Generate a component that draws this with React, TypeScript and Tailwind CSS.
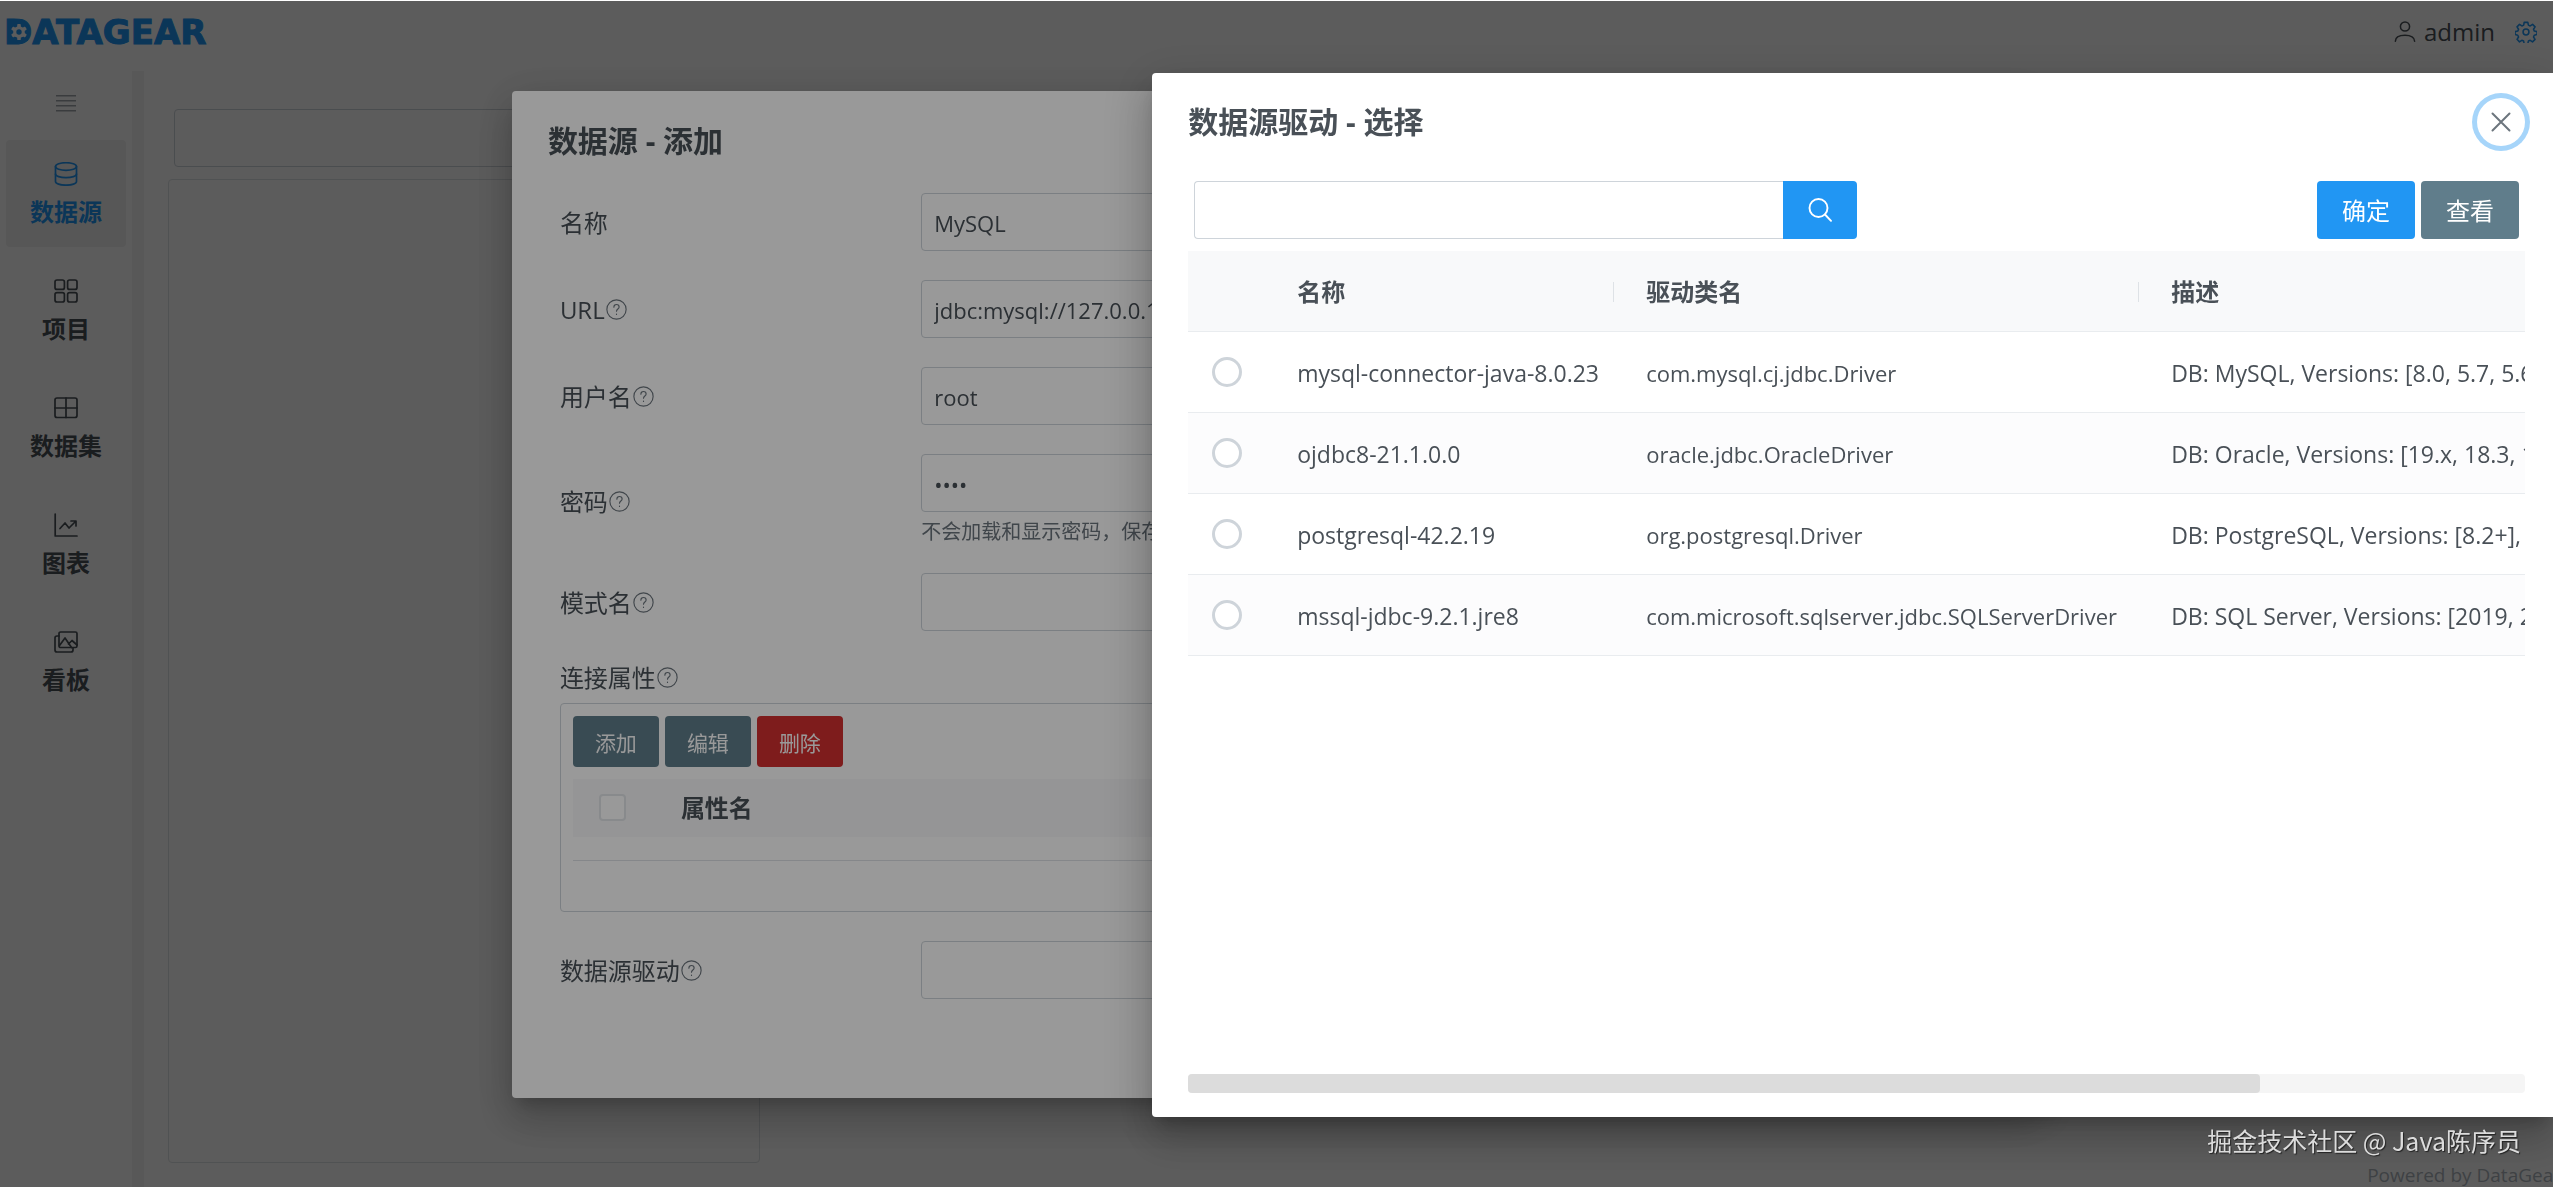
import { ReactNode } from "react";
import clsx from "clsx";

const DRIVERS = [
  {
    name: "mysql-connector-java-8.0.23",
    className: "com.mysql.cj.jdbc.Driver",
    desc: "DB: MySQL, Versions: [8.0, 5.7, 5.6, 5.5]",
  },
  {
    name: "ojdbc8-21.1.0.0",
    className: "oracle.jdbc.OracleDriver",
    desc: "DB: Oracle, Versions: [19.x, 18.3, 12.2]",
  },
  {
    name: "postgresql-42.2.19",
    className: "org.postgresql.Driver",
    desc: "DB: PostgreSQL, Versions: [8.2+], JRE: [8+]",
  },
  {
    name: "mssql-jdbc-9.2.1.jre8",
    className: "com.microsoft.sqlserver.jdbc.SQLServerDriver",
    desc: "DB: SQL Server, Versions: [2019, 2017, 2016]",
  },
];

const DIALOG_SHADOW =
  "shadow-[0_11px_15px_-7px_rgba(0,0,0,0.2),0_24px_38px_3px_rgba(0,0,0,0.14),0_9px_46px_8px_rgba(0,0,0,0.12)]";

function Icon({ children, className = "size-6" }: { children: ReactNode; className?: string }) {
  return (
    <svg
      viewBox="0 0 24 24"
      fill="none"
      stroke="currentColor"
      strokeWidth="1.7"
      strokeLinecap="round"
      strokeLinejoin="round"
      aria-hidden="true"
      className={clsx("shrink-0", className)}
    >
      {children}
    </svg>
  );
}

const NAV = [
  {
    label: "数据源",
    active: true,
    icon: (
      <>
        <ellipse cx="12" cy="4.5" rx="10.5" ry="3.8" />
        <path d="M1.5 4.5v15c0 2.1 4.7 3.7 10.5 3.7s10.5-1.6 10.5-3.7v-15" />
        <path d="M1.5 12c0 2.1 4.7 3.7 10.5 3.7s10.5-1.6 10.5-3.7" />
      </>
    ),
  },
  {
    label: "项目",
    icon: (
      <>
        <rect x="1" y="1" width="9.4" height="9.4" rx="2" />
        <rect x="13.6" y="1" width="9.4" height="9.4" rx="2" />
        <rect x="1" y="13.6" width="9.4" height="9.4" rx="2" />
        <rect x="13.6" y="13.6" width="9.4" height="9.4" rx="2" />
      </>
    ),
  },
  {
    label: "数据集",
    icon: (
      <>
        <rect x="1" y="2" width="22" height="19.5" rx="2" />
        <path d="M12 2v19.5M1 12h22" />
      </>
    ),
  },
  {
    label: "图表",
    icon: (
      <>
        <path d="M1.2 1v22H23" />
        <path d="M6 15.5l5-5.5 4 5 6.5-6.5M17 8h5v5" />
      </>
    ),
  },
  {
    label: "看板",
    icon: (
      <>
        <rect x="5" y="2" width="18" height="15.5" rx="1.6" />
        <path d="M5 6H3c-1.2 0-2 .8-2 2v12c0 1.2.8 2 2 2h14c1.2 0 2-.8 2-2v-2" />
        <path d="M5.5 15.5L11 8l6.5 9.5M14.5 14l3.5-3.5 5 4.5" />
      </>
    ),
  },
];

function Logo() {
  return (
    <a
      href="#home"
      aria-label="DATAGEAR"
      className="relative ml-1 font-['DejaVu_Sans',sans-serif] text-[34px] leading-none font-bold text-[#2196f3] [-webkit-text-stroke:1px_#2196f3]"
    >
      DATAGEAR
      <svg viewBox="0 0 20 20" aria-hidden="true" className="absolute top-2 left-1.5 size-[18px]">
        <rect width="20" height="20" fill="#2196f3" />
        <g fill="#fff">
          <circle cx="10" cy="10" r="6.5" />
          <rect x="8" y="1" width="4" height="18" rx="1" />
          <rect x="8" y="1" width="4" height="18" rx="1" transform="rotate(60 10 10)" />
          <rect x="8" y="1" width="4" height="18" rx="1" transform="rotate(120 10 10)" />
        </g>
        <circle cx="10" cy="10" r="3" fill="#2196f3" />
      </svg>
    </a>
  );
}

function Help() {
  return (
    <Icon className="ml-px size-[21px] text-[#6c757d]">
      <circle cx="12" cy="12" r="11" strokeWidth="1.3" />
      <path d="M9 9.3c0-1.8 1.3-3 3-3s3 1.2 3 2.9c0 2.3-3 2.3-3 4.8M12 17.2v.5" strokeWidth="1.3" />
    </Icon>
  );
}

function Field({
  id,
  label,
  help = true,
  hint,
  type = "text",
  value = "",
}: {
  id: string;
  label: string;
  help?: boolean;
  hint?: string;
  type?: string;
  value?: string;
}) {
  return (
    <div className="flex items-center">
      <label htmlFor={id} className="flex w-1/4 items-center pt-0.5">
        {label}
        {help && <Help />}
      </label>
      <div className="flex-1">
        <input
          id={id}
          type={type}
          defaultValue={value}
          className="block h-[58px] w-full rounded border border-[#ced4da] bg-white px-3 pt-0.5 text-[22px]"
        />
        {hint && <p className="pt-1 text-xl leading-8 text-[#6c757d]">{hint}</p>}
      </div>
    </div>
  );
}

function SmallButton({ children, danger }: { children: ReactNode; danger?: boolean }) {
  return (
    <button
      type="button"
      className={clsx(
        "h-[51px] w-[86px] rounded pt-1 text-[21px] text-white",
        danger ? "bg-[#d32f2f]" : "bg-[#607d8b]"
      )}
    >
      {children}
    </button>
  );
}

function MainPage() {
  return (
    <div className="flex h-screen flex-col bg-white">
      <header className="flex h-[71px] shrink-0 items-center justify-between pr-4 pb-2">
        <Logo />
        <div className="flex items-center">
          <button type="button" className="flex items-center gap-2">
            <Icon className="size-[22px]">
              <circle cx="12" cy="6" r="5" />
              <path d="M1.5 22c0-4 4-6.5 10.5-6.5s10.5 2.5 10.5 6.5" />
            </Icon>
            <span>admin</span>
          </button>
          <button type="button" aria-label="设置" className="ml-5 text-[#2196f3]">
            <Icon className="size-[22px]">
              <circle cx="12" cy="12" r="3.2" />
              <path d="M10 1.5h4l.6 3 2 .9 2.6-1.7 2.7 2.7-1.7 2.6.9 2 2.9.6v3.2l-3 .7-.8 2 1.7 2.5-2.8 2.8-2.5-1.7-2 .8-.6 2.9h-4l-.6-2.9-2-.8-2.5 1.7-2.7-2.8 1.7-2.5-.9-2-2.9-.7v-3.200l2.9-.6.9-2-1.7-2.6 2.7-2.7 2.6 1.700 2-.9z" />
            </Icon>
          </button>
        </div>
      </header>

      <div className="flex min-h-0 flex-1">
        <nav className="flex w-[132px] shrink-0 flex-col items-center">
          <button type="button" aria-label="折叠菜单" className="mt-6 mb-7 text-[#a0a6ac]">
            <svg viewBox="0 0 20 17" fill="currentColor" aria-hidden="true" className="h-[17px] w-5">
              <path d="M0 0h20v1.5H0zM0 5h20v1.5H0zM0 10h20v1.5H0zM0 15h20v1.5H0z" />
            </svg>
          </button>
          {NAV.map((item) => (
            <a
              key={item.label}
              href="#nav"
              className={clsx(
                "mb-2.5 flex h-[107px] w-[120px] flex-col items-center justify-center gap-2 rounded pt-1 font-bold",
                item.active && "bg-[#f1f1f1] text-[#2196f3]"
              )}
            >
              <Icon>{item.icon}</Icon>
              <span className="leading-9">{item.label}</span>
            </a>
          ))}
        </nav>
        <div className="w-3 shrink-0 bg-[#f4f4f4]" />

        <main className="flex min-w-0 flex-1 flex-col pt-[38px]">
          <section className="flex min-h-0 w-[616px] flex-1 flex-col gap-3 pl-6">
            <input
              type="text"
              aria-label="搜索"
              className="ml-1.5 h-[58px] rounded border border-[#ced4da] px-3"
            />
            <div className="flex-1 rounded border border-[#dee2e6]" />
          </section>
          <footer className="-mr-2 h-6 text-right text-[19px] leading-6 text-[#adb5bd]">
            Powered by DataGear
          </footer>
        </main>
      </div>
    </div>
  );
}

function SourceDialog() {
  return (
    <div className="fixed inset-0 top-px flex items-center justify-center bg-black/40">
      <div
        role="dialog"
        aria-label="数据源 - 添加"
        className={clsx("w-[59.9%] rounded bg-white px-9 pt-7 pb-[99px]", DIALOG_SHADOW)}
      >
        <h2 className="text-3xl leading-[44px] font-bold">数据源 - 添加</h2>

        <form className="mt-[30px] flex flex-col gap-[29px] pl-3">
          <Field id="name" label="名称" help={false} value="MySQL" />
          <Field id="url" label="URL" value="jdbc:mysql://127.0.0.1:3306/datagear" />
          <Field id="user" label="用户名" value="root" />
          <div className="-mb-1">
            <Field
              id="password"
              label="密码"
              type="password"
              value="root"
              hint="不会加载和显示密码，保存时密码为空表示不修改"
            />
          </div>
          <Field id="schema" label="模式名" />

          <div>
            <div className="flex items-center pb-2 leading-[35px]">
              连接属性
              <Help />
            </div>
            <div className="h-[209px] rounded border border-[#ced4da] p-3">
              <div className="flex gap-1.5">
                <SmallButton>添加</SmallButton>
                <SmallButton>编辑</SmallButton>
                <SmallButton danger>删除</SmallButton>
              </div>
              <table className="mt-3 w-full text-left">
                <thead>
                  <tr className="h-[58px] bg-[#f8f9fa]">
                    <th className="w-[108px] pl-[26px]">
                      <input
                        type="checkbox"
                        aria-label="全选"
                        className="block size-[27px] appearance-none rounded border-2 border-[#e3e6e9] bg-white"
                      />
                    </th>
                    <th>属性名</th>
                    <th>属性值</th>
                  </tr>
                </thead>
                <tbody>
                  <tr className="h-6 border-b border-[#dee2e6]">
                    <td colSpan={3} />
                  </tr>
                </tbody>
              </table>
            </div>
          </div>

          <Field id="driver" label="数据源驱动" />
        </form>
      </div>
    </div>
  );
}

function DriverDialog() {
  return (
    <div className="fixed inset-0 top-px flex items-center justify-end bg-black/40 pt-0.5">
      <div
        role="dialog"
        aria-label="数据源驱动 - 选择"
        className={clsx(
          "flex h-[88vh] w-[54.87%] flex-col rounded-l bg-white pt-6 pr-7 pb-6 pl-9",
          DIALOG_SHADOW
        )}
      >
        <div className="flex items-center justify-between">
          <h2 className="text-3xl leading-[50px] font-bold">数据源驱动 - 选择</h2>
          <button
            type="button"
            aria-label="关闭"
            className="flex size-12 items-center justify-center rounded-full text-[#6c757d] ring-5 ring-[#a6d5fa]"
          >
            <Icon>
              <path d="M3.5 3.5l17 17M20.5 3.5l-17 17" strokeWidth="2" />
            </Icon>
          </button>
        </div>

        <div className="mt-[34px] flex items-center justify-between px-1.5">
          <form className="flex w-1/2">
            <input
              type="text"
              aria-label="关键字"
              className="h-[58px] min-w-0 flex-1 rounded-l border border-r-0 border-[#ced4da] px-3"
            />
            <button
              type="button"
              aria-label="搜索"
              className="flex w-[74px] items-center justify-center rounded-r bg-[#2196f3] text-white"
            >
              <Icon>
                <circle cx="10.5" cy="10" r="9" strokeWidth="1.9" />
                <path d="M17 16.5l6 6.3" strokeWidth="1.9" />
              </Icon>
            </button>
          </form>
          <div className="flex gap-1.5 text-white">
            <button type="button" className="h-[58px] w-[98px] rounded bg-[#2196f3] pt-0.5">
              确定
            </button>
            <button type="button" className="h-[58px] w-[98px] rounded bg-[#607d8b] pt-0.5">
              查看
            </button>
          </div>
        </div>

        <div className="mt-3 flex-1 overflow-hidden">
          <table className="w-[1670px] table-fixed text-left whitespace-nowrap">
            <colgroup>
              <col className="w-[85px]" />
              <col className="w-[349px]" />
              <col className="w-[525px]" />
              <col />
            </colgroup>
            <thead>
              <tr className="h-[81px] border-b border-[#e9ecef] bg-[#f8f9fa]">
                <th />
                <th className="pt-0.5 pl-6">
                  <div className="flex items-center justify-between">
                    名称
                    <span className="mr-2 h-5 w-px bg-[#dee2e6]" />
                  </div>
                </th>
                <th className="pt-0.5 pl-6">
                  <div className="flex items-center justify-between">
                    驱动类名
                    <span className="mr-2 h-5 w-px bg-[#dee2e6]" />
                  </div>
                </th>
                <th className="pt-0.5 pl-6">描述</th>
              </tr>
            </thead>
            <tbody>
              {DRIVERS.map((driver) => (
                <tr key={driver.name} className="h-[81px] border-b border-[#e9ecef] even:bg-[#fcfcfd]">
                  <td className="pl-6">
                    <input
                      type="radio"
                      name="driver"
                      aria-label={driver.name}
                      className="block size-[30px] appearance-none rounded-full border-3 border-[#ced4da] bg-white"
                    />
                  </td>
                  <td className="pt-0.5 pl-6 text-[23px]">{driver.name}</td>
                  <td className="pt-0.5 pl-6 text-[22px]">{driver.className}</td>
                  <td className="pt-0.5 pl-6 text-[23px]">{driver.desc}</td>
                </tr>
              ))}
            </tbody>
          </table>
        </div>

        <div className="h-[19px] shrink-0 rounded bg-[#f5f5f5]">
          <div className="h-full w-[80.2%] rounded bg-[#dcdcdc]" />
        </div>
      </div>
    </div>
  );
}

export default function App() {
  return (
    <div className="font-['Open_Sans','Noto_Sans_CJK_SC',sans-serif] text-2xl text-[#495057]">
      <MainPage />
      <SourceDialog />
      <DriverDialog />
      <p className="fixed right-8 bottom-[26px] font-['Noto_Sans_CJK_SC',sans-serif] text-[25px] leading-[42px] text-[#dcdcdc] [text-shadow:1px_1px_1px_#222]">
        掘金技术社区 @ Java陈序员
      </p>
    </div>
  );
}
